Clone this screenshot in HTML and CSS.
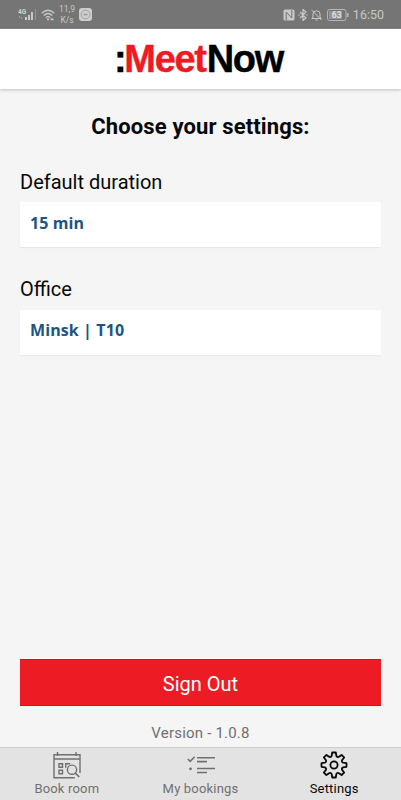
FILE: index.html
```
<!DOCTYPE html>
<html lang="en">
<head>
<meta charset="utf-8">
<title>MeetNow</title>
<link rel="stylesheet" href="styles.css">
</head>
<body>
<div class="app">
  <div class="status">
    <svg class="signal" width="19" height="14" viewBox="0 0 19 14"><text x="0" y="6" class="net">4G</text><g fill="#c8c8c8"><path d="M7 9h2v3H7zM10 7h2v5h-2zM13 4h2v8h-2z"/><path d="M17 1h1v11h-1z" opacity=".4"/><path d="M1 8h1v2H1zM3 9h1v2H3z" opacity=".5"/></g></svg>
    <svg class="wifi" width="14" height="12" viewBox="0 0 14 12" fill="none" stroke="#c8c8c8" stroke-width="1.3"><path d="M.7 4.2Q7-1.6 13.3 4.2M2.8 6.5Q7 2.6 11.2 6.5M4.8 8.6Q7 6.6 9.2 8.6"/><path d="M6 10.4h2M9.5 10.4h3" stroke-width="1.6"/></svg>
    <div class="speed"><span>11,9</span><span>K/s</span></div>
    <svg class="appicon" width="13" height="13" viewBox="0 0 13 13"><rect width="13" height="13" rx="3" fill="#cecece"/><circle cx="6.5" cy="6.5" r="4.4" fill="none" stroke="#999" stroke-width=".8"/><path d="M4.500 6.500h4" stroke="#999" stroke-width="1.500"/></svg>
    <div class="right">
      <svg width="12" height="12" viewBox="0 0 12 12"><rect x=".5" y=".5" width="11" height="11" rx="1.500" fill="#c8c8c8"/><path d="M3.200 11.500V3l5.600 6V.5" fill="none" stroke="#757575" stroke-width="1"/></svg>
      <svg width="10" height="12" viewBox="0 0 10 12" fill="none" stroke="#c8c8c8" stroke-width="1.200"><path d="M2 3l6 6-3 2.500V.5L8 3 2 9M.3 6h1.400M8.300 6h1.400"/></svg>
      <svg width="11" height="12" viewBox="0 0 11 12" fill="none" stroke="#c8c8c8"><path d="M.8 9.500h9.400L9 8V5Q9 1.800 5.500 1.800T2 5v3zM4.500 11h2M.5.800l10 10.400"/></svg>
      <svg class="battery" width="22" height="12" viewBox="0 0 22 12"><rect x=".5" y=".5" width="18.500" height="11" rx="2" fill="none" stroke="#b5b5b5"/><rect x="2" y="2" width="13" height="8" fill="#959595"/><path d="M20.800 4v4" stroke="#c8c8c8" stroke-width="1.200"/><text x="9.700" y="9.200" text-anchor="middle" class="charge">63</text></svg>
      <span class="time">16:50</span>
    </div>
  </div>
  <header class="header"><div class="logo"><span class="colon">:</span><span class="meet">Meet</span><span>Now</span></div></header>
  <main class="main">
    <h1 class="title">Choose your settings:</h1>
    <label class="label">Default duration</label>
    <div class="field">15 min</div>
    <label class="label">Office</label>
    <div class="field">Minsk | T10</div>
    <button class="signout">Sign Out</button>
    <div class="version">Version - 1.0.8</div>
  </main>
  <nav class="tabs">
    <div class="tab">
      <svg width="30" height="28" viewBox="0 0 30 28" fill="none" stroke="#707070" stroke-width="1.400"><path d="M22.800 26.800H2V3.700h26V22M2 8h26M5.500 1v4M24 1v4"/><path d="M7 12.700h3.500v3.500H7zM7 19.300h3.500v3.500H7zM13.700 16.800v-4.100h4.500"/><circle cx="20" cy="18.700" r="4.600"/><path d="M23.200 22l4 4" stroke-width="1.700"/></svg>
      <span>Book room</span>
    </div>
    <div class="tab">
      <svg width="30" height="28" viewBox="0 0 30 28" fill="none" stroke="#707070" stroke-width="1.600"><path d="M1.800 8l2.400 2.400 4.500-4.700M11 6.700h18M11 10.600h10M11 17.500h18M11 21.500h10"/><circle cx="4.500" cy="17.800" r="1.400" fill="#707070" stroke="none"/></svg>
      <span>My bookings</span>
    </div>
    <div class="tab active">
      <svg width="30" height="28" viewBox="0 0 30 28" fill="none" stroke="#080808" stroke-width="1.800" stroke-linejoin="round"><path d="M13.200 1.500h3.600l.5 3.300q.2.800 1 1.200.9.300 1.600-.2l2.700-1.900 2.500 2.500-1.900 2.700q-.5.700-.2 1.500.4.900 1.200 1.100l3.300.5v3.600l-3.300.5q-.8.200-1.200 1.100-.3.800.2 1.500l1.900 2.700-2.500 2.500-2.700-1.900q-.7-.5-1.600-.2-.8.400-1 1.200l-.5 3.300h-3.600l-.5-3.300q-.2-.8-1-1.200-.9-.3-1.600.2l-2.700 1.900-2.500-2.500 1.900-2.700q.5-.7.2-1.500-.4-.9-1.200-1.100l-3.300-.5v-3.600l3.300-.5q.8-.2 1.200-1.100.3-.8-.2-1.500L4.900 6.400l2.500-2.500 2.700 1.900q.7.500 1.600.2.800-.4 1-1.200z"/><circle cx="15" cy="14" r="3.600"/></svg>
      <span>Settings</span>
    </div>
  </nav>
</div>
</body>
</html>
```
FILE: styles.css
```
* { box-sizing: border-box; }
body { margin: 0; font-family: Roboto, sans-serif; color: #080808; }
svg { display: block; flex: none; }
.app { width: 401px; height: 800px; display: flex; flex-direction: column; background: #f5f5f5; overflow: hidden; }
.status { height: 29px; flex: none; background: #757575; border-bottom: 1px solid #8c8686; color: #c8c8c8; display: flex; align-items: center; padding: 1px 17px 0 18px; }
.net { font: bold 6.500px Roboto, sans-serif; fill: #d0d0d0; }
.wifi { margin-left: 4px; }
.speed { display: flex; flex-direction: column; align-items: center; width: 18px; margin-left: 3px; font-size: 8.500px; line-height: 11px; }
.appicon { margin-left: 3px; }
.right { margin-left: auto; display: flex; align-items: center; gap: 3px; }
.battery { margin-left: 2px; }
.charge { font: bold 8.500px Roboto, sans-serif; fill: #e0e0e0; }
.time { font-size: 12.500px; line-height: 14px; margin-left: 1px; }
.header { height: 60px; flex: none; background: #fff; display: flex; justify-content: center; box-shadow: 0 1px 3px rgba(0,0,0,.22); }
.logo { display: flex; margin-right: 3px; font: bold 38px/60px "Liberation Sans", sans-serif; letter-spacing: -1.300px; color: #000; -webkit-text-stroke: .4px currentColor; }
.colon { margin-right: -1px; margin-left: -1px; }
.meet { color: #ed1c24; margin-right: 1px; }
.main { flex: 1; display: flex; flex-direction: column; padding: 0 20px; }
.title { margin: 25px 0 0; font-size: 22px; line-height: 26px; font-weight: 700; letter-spacing: .13px; text-align: center; }
.label { margin-top: 30px; font-size: 20px; line-height: 26px; height: 26px; }
.title + .label { margin-top: 29px; }
.field + .label { line-height: 25px; }
.field { height: 45px; margin-top: 7px; background: #fff; padding: 9px 10px; font: 700 16px/24px "Open Sans", sans-serif; letter-spacing: .1px; color: #205580; box-shadow: 0 1px 1px rgba(0,0,0,.05); }
.label + .field ~ .field { line-height: 23px; }
.signout { margin-top: auto; height: 47px; flex: none; border: 0; border-top: 1px solid #cf151d; border-bottom: 1px solid #cf151d; background: #ed1c24; color: #fff; font: 20px/45px Roboto, sans-serif; padding: 2px 0 0; }
.version { margin-top: 15px; height: 26px; line-height: 24px; font-size: 15px; letter-spacing: .2px; text-align: center; color: #707070; }
.tabs { height: 53px; flex: none; display: flex; background: #e3e3e3; border-top: 1px solid #cecece; }
.tab { flex: 1; display: flex; flex-direction: column; align-items: center; padding-top: 3px; font-size: 13px; line-height: 19px; letter-spacing: .18px; color: #707070; }
.active { color: #080808; }
```
